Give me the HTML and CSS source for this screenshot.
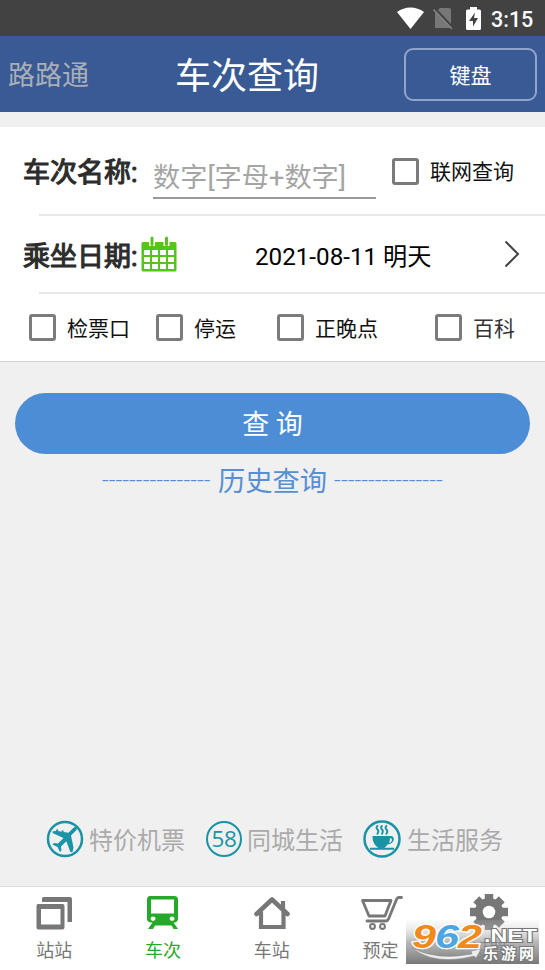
FILE: index.html
```html
<!DOCTYPE html>
<html lang="zh-CN">
<head>
<meta charset="utf-8">
<title>车次查询</title>
<link rel="stylesheet" href="styles.css">
</head>
<body>
<div class="app">
  <div class="status">
    <svg class="wifi" width="28" height="22" viewBox="0 0 28 22"><path fill="#fff" d="M0 5C8-1 19-1 27 5L13.500 22z"/></svg>
    <svg class="sim" width="20" height="23" viewBox="0 0 20 23"><path fill="#777" d="M7 1h9a2 2 0 0 1 2 2v18H2V6z"/><path stroke="#424242" stroke-width="2" d="M1.500 1L20 20.500"/><path stroke="#808080" stroke-width="1.700" d="M.5 2.500L19 22"/></svg>
    <svg class="battery" width="15" height="23" viewBox="0 0 15 23"><path fill="#fff" d="M4 0h7v2.500h2.500A1.500 1.500 0 0 1 15 4v17.500a1.500 1.500 0 0 1-1.500 1.500h-12A1.500 1.500 0 0 1 0 21.500V4a1.500 1.500 0 0 1 1.500-1.500H4z"/><path fill="#424242" d="M9 5.500L3 14h4v5.500l5-8.500H8z"/></svg>
    <span class="clock">3:15</span>
  </div>
  <header class="header">
    <span class="brand">路路通</span>
    <h1 class="title">车次查询</h1>
    <button class="keyboard">键盘</button>
  </header>
  <section class="form">
    <div class="row row-name">
      <span class="label">车次名称:</span>
      <span class="field">数字[字母+数字]</span>
      <label class="check check-net"><i class="box"></i><span>联网查询</span></label>
    </div>
    <div class="row row-date">
      <span class="label">乘坐日期:</span>
      <svg class="calendar" width="36" height="36" viewBox="0 0 36 36"><path fill="#55c421" d="M2 6h32q1.500 0 1.500 1.500V34q0 1.500-1.500 1.500H2Q.5 35.500.5 34V7.500Q.5 6 2 6z"/><path fill="#fff" d="M8 4h6v6H8zM22.500 4h6v6h-6zM3 14h6v5H3zm8 0h6v5h-6zm8 0h6v5h-6zm8 0h6v5h-6zM3 21h6v5H3zm8 0h6v5h-6zm8 0h6v5h-6zm8 0h6v5h-6zM3 28h6v5H3zm8 0h6v5h-6zm8 0h6v5h-6zm8 0h6v5h-6z"/><path stroke="#55c421" stroke-width="3" stroke-linecap="round" d="M11 2v6.500M25.500 2v6.500"/></svg>
      <span class="date">2021-08-11 明天</span>
      <svg class="chevron" width="16" height="28" viewBox="0 0 16 28"><path fill="none" stroke="#444" stroke-width="2" d="M1.500 1.500L14 14 1.500 26.500"/></svg>
    </div>
    <div class="row row-options">
      <label class="check opt-gate"><i class="box"></i><span>检票口</span></label>
      <label class="check opt-stop"><i class="box"></i><span>停运</span></label>
      <label class="check opt-late"><i class="box"></i><span>正晚点</span></label>
      <label class="check opt-wiki"><i class="box"></i><span>百科</span></label>
    </div>
  </section>
  <button class="query">查 询</button>
  <div class="history"><span class="dashes">----------------</span><span class="history-text">历史查询</span><span class="dashes">----------------</span></div>
  <div class="services">
    <a class="service s-air"><svg width="38" height="38" viewBox="0 0 38 38"><circle cx="19" cy="19" r="17" fill="none" stroke="#1a93a6" stroke-width="2.500"/><path fill="#1a93a6" d="M30.500 7.500c1 1 .2 2.400-1 3.600L25 15.500l2.500 12-1 4.500-2 .2-4.200-11-5.300 5.300.5 4-1.500 1.500-2.500-5-5-2.500 1.500-1.500 4 .5 5.500-5.500L6.500 13l.3-1.800 3.200-.3.500-1.600 1.600.3v1.500l3.400.6.4-1.500 1.600.2.200 1.600 4.800.8 4.200-4.300c1.400-1.300 2.800-2 3.800-1z"/></svg><span class="service-name">特价机票</span></a>
    <a class="service s-city"><span class="badge58">58</span><span class="service-name">同城生活</span></a>
    <a class="service s-life"><svg width="38" height="38" viewBox="0 0 38 38"><circle cx="19" cy="19" r="17.500" fill="none" stroke="#1a93a6" stroke-width="2.500"/><path fill="#1a93a6" fill-rule="evenodd" d="M9.500 16H27c6-.5 5 8-2.500 8.500-1 1.500-2 2.500-3.200 3.200H31v2H7v-2h8.500C11 25 9.500 21 9.500 16zM27 18c0 2-.3 3.500-1 5 3.500-.5 4-5 1-5z"/><path fill="none" stroke="#1a93a6" stroke-width="1.900" d="M15 5.500q-3 2 0 4.500 1 2-1 4.500M19.500 5.500q-3 2 0 4.500 1 2-1 4.500M24 5.500q-3 2 0 4.500 1 2-1 4.500"/></svg><span class="service-name">生活服务</span></a>
  </div>
  <nav class="tabs">
    <a class="tab"><svg width="36" height="34" viewBox="0 0 36 34"><path fill="#777" fill-rule="evenodd" d="M2 8h24.500q2 0 2 2v21.500q0 2-2 2H2.500q-2 0-2-2V10q0-2 1.500-2zm3 5v15.500h19.500V13zM6 6V2.500Q6 1 7.500 1H34q2 0 2 2v23h-4.500V6z"/></svg><span>站站</span></a>
    <a class="tab active"><svg width="34" height="34" viewBox="0 0 34 34"><path fill="#25a928" fill-rule="evenodd" d="M4 0h24q4 0 4 4v19q0 2-2.500 3.500H27.500L32 33h-4.500l-2-3.500H9L7 33H2l4.500-6.500H4.500Q1 25.500 1 23V4q0-4 3-4zM5 3.500V17.500h23V3.500zM7 20.500a2.500 2.200 0 1 0 .1 0zm19 0a2.500 2.200 0 1 0 .1 0z"/></svg><span>车次</span></a>
    <a class="tab"><svg width="38" height="34" viewBox="0 0 38 34"><path fill="none" stroke="#777" stroke-width="4.600" stroke-linejoin="round" stroke-linecap="round" d="M3.500 18L19 3.500 34.500 18"/><path fill="none" stroke="#777" stroke-width="4.200" d="M8 15.500V31h22.500V15.500M30 5v9"/></svg><span>车站</span></a>
    <a class="tab"><svg class="cart" width="42" height="34" viewBox="0 0 42 34"><path fill="none" stroke="#777" stroke-width="2.800" stroke-linejoin="round" stroke-linecap="round" d="M40.500 1.500h-3q-1 0-2 2L27.500 23q-1 2-3 2H6M1.500 4.500H30L24 20H8z"/><circle cx="11.500" cy="30.500" r="2.400" fill="none" stroke="#777" stroke-width="2"/><circle cx="21.500" cy="30.500" r="2.400" fill="none" stroke="#777" stroke-width="2"/></svg><span>预定</span></a>
    <a class="tab"><svg width="38" height="36" viewBox="-19 -18 38 36"><g fill="#777"><circle r="14"/><path d="M-4.200-18h8.400v36h-8.400zM-19-4.200h38v8.400h-38z"/><path transform="rotate(45)" d="M-4.200-18h8.400v36h-8.400zM-18-4.200h36v8.400h-36z"/></g><circle r="6.300" fill="#fff"/></svg><span>设置</span></a>
  </nav>
  <svg class="stamp" width="134" height="44" viewBox="0 0 134 44">
    <defs><linearGradient id="shade" x1="0" y1="0" x2="0" y2="1"><stop offset="0" stop-color="#ddd" stop-opacity=".1"/><stop offset=".5" stop-color="#999" stop-opacity=".7"/><stop offset="1" stop-color="#777"/></linearGradient></defs>
    <rect width="133" height="44" fill="url(#shade)"/>
    <path fill="#eee" stroke="#888" stroke-width=".5" d="M6 28q25 13 60 6l-1-3 10-2-5 9-2-2Q29 46 6 28z"/>
    <g class="stamp-num"><text x="6" y="28" textLength="24" lengthAdjust="spacingAndGlyphs" fill="#f18a1c">9</text><text x="29" y="28" textLength="24" lengthAdjust="spacingAndGlyphs" fill="#4fa5df">6</text><text x="52" y="28" textLength="24" lengthAdjust="spacingAndGlyphs" fill="#f18a1c">2</text></g>
    <text class="stamp-net" x="78" y="22" textLength="53" lengthAdjust="spacingAndGlyphs">.NET</text>
    <text class="stamp-cn" x="77" y="39" textLength="51">乐游网</text>
  </svg>
</div>
</body>
</html>
```
FILE: styles.css
```css
* { box-sizing: border-box; }
body { margin: 0; }
.app {
  position: relative;
  display: flex;
  flex-direction: column;
  width: 545px;
  height: 970px;
  overflow: hidden;
  background: #f0f0f0;
  font-family: Roboto, "Noto Sans CJK SC", sans-serif;
  color: #111;
}
svg { display: block; flex: none; }
button { border: 0; padding: 0; font: inherit; }

.status { display: flex; align-items: flex-start; height: 36px; padding: 7px 0 0 397px; background: #424242; }
.sim { margin-left: 8px; }
.battery { margin-left: 13px; }
.clock { margin-left: 10px; color: #fff; font-size: 21.500px; font-weight: 500; line-height: 25px; }

.header { display: grid; grid-template-columns: 167px 1fr 133px; align-items: center; height: 76px; padding: 0 8px; background: #3a5a95; }
.brand { padding-top: 4px; color: #a9afb8; font-size: 27px; line-height: 36px; }
.title { margin: 0; padding-top: 5px; color: #fff; font-size: 36px; font-weight: 400; line-height: 50px; }
.keyboard { width: 133px; height: 53px; border: 2px solid #91a4cb; border-radius: 9px; background: transparent; color: #fff; font-size: 21px; }

.form { display: flex; flex-direction: column; height: 235px; margin-top: 15px; border-bottom: 1px solid #d2d2d2; background: #fff; }
.row { display: flex; align-items: center; }
.row-name, .row-date { margin-left: 39px; border-bottom: 2px solid #e7e7e7; }
.row-name { height: 89px; }
.row-date { height: 78px; }
.row-options { height: 67px; padding-left: 29px; }
.label { width: 117px; margin-left: -16px; padding-top: 5px; font-size: 27px; font-weight: 400; line-height: 38px; color: #2c2c2c; -webkit-text-stroke: 1.100px #2c2c2c; white-space: nowrap; }
.field { width: 223px; height: 44px; margin: 12px 0 0 13px; border-bottom: 2px solid #999; color: #a5a5a5; font-size: 27.200px; line-height: 46px; white-space: nowrap; }
.check { display: flex; align-items: center; gap: 11px; font-size: 21px; line-height: 30px; white-space: nowrap; }
.check span { padding-top: 2px; }
.check-net { margin-left: 16px; padding-top: 1px; }
.box { width: 27px; height: 27px; border: 3px solid #7b7b7b; border-radius: 3px; }
.calendar { margin-left: 1px; }
.date { width: 249px; margin-left: 78px; padding-top: 5px; font-size: 24.200px; line-height: 34px; color: #000; }
.opt-gate { width: 127px; }
.opt-stop { width: 121px; }
.opt-late { width: 158px; }
.opt-wiki { color: #333; }

.query { width: 515px; height: 61px; margin: 31px 15px 0; padding-top: 4px; border-radius: 31px; background: #4d8dd6; color: #fff; font-size: 27px; line-height: 57px; }
.history { display: flex; justify-content: center; gap: 7px; height: 54px; color: #568fd2; line-height: 54px; }
.history-text { padding-top: 1px; font-size: 27.300px; }
.dashes { width: 109px; font-size: 23.700px; font-weight: 300; line-height: 52px; white-space: nowrap; }

.services { display: flex; height: 38px; margin: 312px 0 0 46px; color: #aaa; font-size: 24px; line-height: 36px; }
.service { display: flex; align-items: center; gap: 5px; width: 159px; white-space: nowrap; }
.service-name { padding-top: 4px; }
.s-life { margin-left: -1px; gap: 6px; }
.badge58 { width: 36px; height: 36px; margin-left: 1px; border: 2px solid #1a93a6; border-radius: 50%; color: #1a93a6; font-family: "Open Sans", sans-serif; font-size: 22.500px; line-height: 32px; text-align: center; letter-spacing: -.3px; }

.tabs { display: grid; grid-template-columns: repeat(5, 108.700px); height: 84px; margin-top: auto; border-top: 1px solid #dcdcdc; background: #fff; }
.tab { display: grid; grid-template-rows: 43px 41px; justify-items: center; align-items: end; color: #777; font-size: 18px; line-height: 40px; }
.cart { margin-left: 3px; }
.active { color: #25a928; }

.stamp { position: absolute; left: 406px; top: 920px; }
.stamp-num { font: italic 700 34px "Liberation Sans", sans-serif; stroke: #fff; stroke-width: 2.500px; paint-order: stroke; }
.stamp-net { font: 700 19px "Liberation Sans", sans-serif; fill: #fff; stroke: #777; stroke-width: 2px; paint-order: stroke; }
.stamp-cn { font: 700 15px "Noto Sans CJK SC", sans-serif; fill: #fff; stroke: #777; stroke-width: 2px; paint-order: stroke; }
```
